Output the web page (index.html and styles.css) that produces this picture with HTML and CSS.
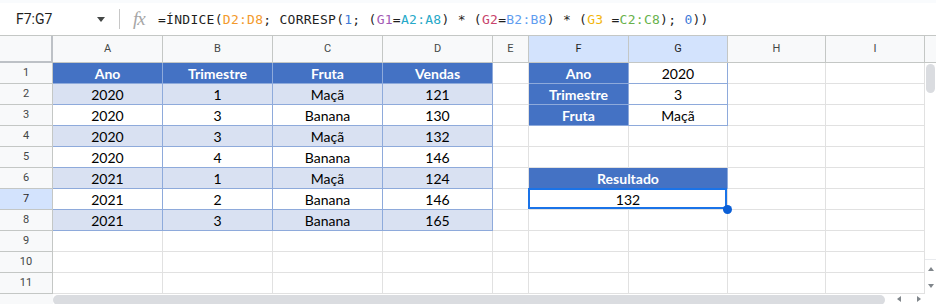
FILE: index.html
```html
<!doctype html>
<html lang="pt">
<head>
<meta charset="UTF-8">
<title>ÍNDICE CORRESP</title>
<link rel="stylesheet" href="styles.css">
</head>
<body>
<div class="top-strip"></div>
<div class="formula-bar">
	<div class="name-box">
		<span class="name">F7:G7</span>
		<span class="caret"></span>
	</div>
	<div class="divider"></div>
	<span class="fx">fx</span>
	<div class="formula">=ÍNDICE(<span class="c-orange">D2:D8</span>; CORRESP(<span class="c-blue">1</span>; (<span class="c-purple">G1</span>=<span class="c-teal">A2:A8</span>) * (<span class="c-red">G2</span>=<span class="c-sky">B2:B8</span>) * (<span class="c-yellow">G3</span> =<span class="c-green">C2:C8</span>); <span class="c-blue">0</span>))</div>
</div>

<div class="sheet">
	<div class="vscroll">
		<div class="thumb"></div>
		<div class="arrows">
			<span class="up"></span>
			<span class="down"></span>
		</div>
	</div>

	<!-- cabeçalho -->
	<div class="head corner"></div>
	<div class="head">A</div>
	<div class="head">B</div>
	<div class="head">C</div>
	<div class="head">D</div>
	<div class="head">E</div>
	<div class="head on">F</div>
	<div class="head on">G</div>
	<div class="head">H</div>
	<div class="head">I</div>
	<div class="head side"></div>

	<!-- 1 -->
	<div class="num">1</div>
	<div class="cell th">Ano</div>
	<div class="cell th">Trimestre</div>
	<div class="cell th">Fruta</div>
	<div class="cell th">Vendas</div>
	<div class="cell"></div>
	<div class="cell th">Ano</div>
	<div class="cell val">2020</div>
	<div class="cell"></div>
	<div class="cell"></div>

	<!-- 2 -->
	<div class="num">2</div>
	<div class="cell band">2020</div>
	<div class="cell band">1</div>
	<div class="cell band">Maçã</div>
	<div class="cell band">121</div>
	<div class="cell"></div>
	<div class="cell th">Trimestre</div>
	<div class="cell val">3</div>
	<div class="cell"></div>
	<div class="cell"></div>

	<!-- 3 -->
	<div class="num">3</div>
	<div class="cell val">2020</div>
	<div class="cell val">3</div>
	<div class="cell val">Banana</div>
	<div class="cell val">130</div>
	<div class="cell"></div>
	<div class="cell th">Fruta</div>
	<div class="cell val">Maçã</div>
	<div class="cell"></div>
	<div class="cell"></div>

	<!-- 4 -->
	<div class="num">4</div>
	<div class="cell band">2020</div>
	<div class="cell band">3</div>
	<div class="cell band">Maçã</div>
	<div class="cell band">132</div>
	<div class="cell"></div>
	<div class="cell"></div>
	<div class="cell"></div>
	<div class="cell"></div>
	<div class="cell"></div>

	<!-- 5 -->
	<div class="num">5</div>
	<div class="cell val">2020</div>
	<div class="cell val">4</div>
	<div class="cell val">Banana</div>
	<div class="cell val">146</div>
	<div class="cell"></div>
	<div class="cell"></div>
	<div class="cell"></div>
	<div class="cell"></div>
	<div class="cell"></div>

	<!-- 6 -->
	<div class="num">6</div>
	<div class="cell band">2021</div>
	<div class="cell band">1</div>
	<div class="cell band">Maçã</div>
	<div class="cell band">124</div>
	<div class="cell"></div>
	<div class="cell th wide">Resultado</div>
	<div class="cell"></div>
	<div class="cell"></div>

	<!-- 7 -->
	<div class="num on">7</div>
	<div class="cell val">2021</div>
	<div class="cell val">2</div>
	<div class="cell val">Banana</div>
	<div class="cell val">146</div>
	<div class="cell"></div>
	<div class="cell wide picked">132<span class="handle"></span></div>
	<div class="cell"></div>
	<div class="cell"></div>

	<!-- 8 -->
	<div class="num">8</div>
	<div class="cell band">2021</div>
	<div class="cell band">3</div>
	<div class="cell band">Banana</div>
	<div class="cell band">165</div>
	<div class="cell"></div>
	<div class="cell"></div>
	<div class="cell"></div>
	<div class="cell"></div>
	<div class="cell"></div>

	<!-- 9 - 11 -->
	<div class="num">9</div>
	<div class="cell"></div><div class="cell"></div><div class="cell"></div><div class="cell"></div><div class="cell"></div>
	<div class="cell"></div><div class="cell"></div><div class="cell"></div><div class="cell"></div>
	<div class="num">10</div>
	<div class="cell"></div><div class="cell"></div><div class="cell"></div><div class="cell"></div><div class="cell"></div>
	<div class="cell"></div><div class="cell"></div><div class="cell"></div><div class="cell"></div>
	<div class="num">11</div>
	<div class="cell"></div><div class="cell"></div><div class="cell"></div><div class="cell"></div><div class="cell"></div>
	<div class="cell"></div><div class="cell"></div><div class="cell"></div><div class="cell"></div>
</div>

<div class="hscroll">
	<div class="hs-left"></div>
	<div class="hs-thumb"></div>
	<div class="hs-arrows">
		<span class="left"></span>
		<span class="right"></span>
	</div>
</div>
</body>
</html>
```

FILE: styles.css
```css
*{ margin:0; padding:0; box-sizing:border-box;}
body{
	width:936px;
	height:304px;
	overflow:hidden;
	background:#fff;
	font-family:Roboto, "Noto Sans", sans-serif;
}
.top-strip{
	height:3px;
	background:#f9fbfd;
}

/* barra de fórmulas */
.formula-bar{
	display:flex;
	align-items:center;
	height:32px;
}
.name-box{
	display:flex;
	align-items:center;
	width:119px;
	padding-left:16px;
}
.name{
	font-size:14px;
	color:#1f1f1f;
	width:81px;
}
.caret{
	width:0;
	height:0;
	border-left:4px solid transparent;
	border-right:4px solid transparent;
	border-top:5px solid #444746;
}
.divider{
	width:1px;
	height:20px;
	background:#c7c7c7;
}
.fx{
	margin-left:13px;
	width:25px;
	font-family:"Liberation Serif", serif;
	font-style:italic;
	font-size:19px;
	color:#a6a6a6;
	letter-spacing:-1px;
}
.formula{
	font-family:"DejaVu Sans Mono", monospace;
	font-size:13px;
	letter-spacing:0.27px;
	color:#1f1f1f;
	white-space:pre;
	padding-top:1px;
}
.c-orange{ color:#f39a2b;}
.c-blue{ color:#3e7ad8;}
.c-purple{ color:#a25ab4;}
.c-teal{ color:#26a9c8;}
.c-red{ color:#c8436c;}
.c-sky{ color:#5f9ef0;}
.c-yellow{ color:#f3b60c;}
.c-green{ color:#68b24c;}

/* grade */
.sheet{
	display:grid;
	grid-template-columns:53px 110px 110px 110px 110px 36px 100px 99px 98px 99px 11px;
	grid-template-rows:27px repeat(11, 21px);
	border-top:1px solid #c4c7c5;
}
.head, .num{
	background:#f8f9fa;
	border-right:1px solid #c4c7c5;
	border-bottom:1px solid #c4c7c5;
	font-size:11px;
	color:#444746;
	text-align:center;
}
.head{ line-height:26px;}
.num{ line-height:20px;}
.head.on, .num.on{
	background:#d3e3fd;
	color:#1f1f1f;
}
.corner{
	border-right:2px solid #bdc1c6;
	border-bottom:2px solid #bdc1c6;
}
.head.side{
	border-right:none;
}
.cell{
	position:relative;
	border-right:1px solid #e1e1e1;
	border-bottom:1px solid #e1e1e1;
	font-family:Lato, "Open Sans", sans-serif;
	font-size:14px;
	line-height:21px;
	text-align:center;
	color:#000;
	white-space:nowrap;
}
.cell.th{
	background:#4472c4;
	color:#fff;
	font-weight:700;
	border-color:#8eaadb;
}
.cell.band{
	background:#d9e1f2;
	border-color:#8eaadb;
}
.cell.val{
	border-color:#8eaadb;
}
.cell.wide{
	grid-column:span 2;
}
.cell.picked::after{
	content:"";
	position:absolute;
	top:-1px;
	left:-1px;
	right:0;
	bottom:0;
	border:2px solid #1a73e8;
}
.handle{
	position:absolute;
	right:-5px;
	bottom:-5px;
	width:9px;
	height:9px;
	border-radius:50%;
	background:#0b5fd6;
	z-index:2;
}

/* barras de rolagem */
.vscroll{
	grid-column:11;
	grid-row:2 / span 11;
	display:flex;
	flex-direction:column;
	align-items:center;
}
.thumb{
	margin-top:1px;
	width:9px;
	height:29px;
	border-radius:5px;
	background:#dadce0;
}
.arrows{
	margin-top:auto;
	width:100%;
	height:35px;
	border-top:1px solid #e8eaed;
	display:flex;
	flex-direction:column;
	align-items:center;
	justify-content:space-around;
}
.up, .down, .left, .right{
	width:0;
	height:0;
	border:3px solid transparent;
}
.up{ border-bottom:4px solid #80868b; border-top:0;}
.down{ border-top:4px solid #80868b; border-bottom:0;}
.hscroll{
	display:flex;
	height:10px;
	background:#fff;
}
.hs-left{
	width:53px;
	background:#f8f9fa;
}
.hs-thumb{
	width:832px;
	height:10px;
	margin-top:1px;
	border-radius:5px;
	background:#dadce0;
}
.hs-arrows{
	display:flex;
	align-items:center;
	justify-content:space-around;
	width:40px;
	margin-left:4px;
}
.left{ border-right:4px solid #80868b; border-left:0;}
.right{ border-left:4px solid #80868b; border-right:0;}
```
